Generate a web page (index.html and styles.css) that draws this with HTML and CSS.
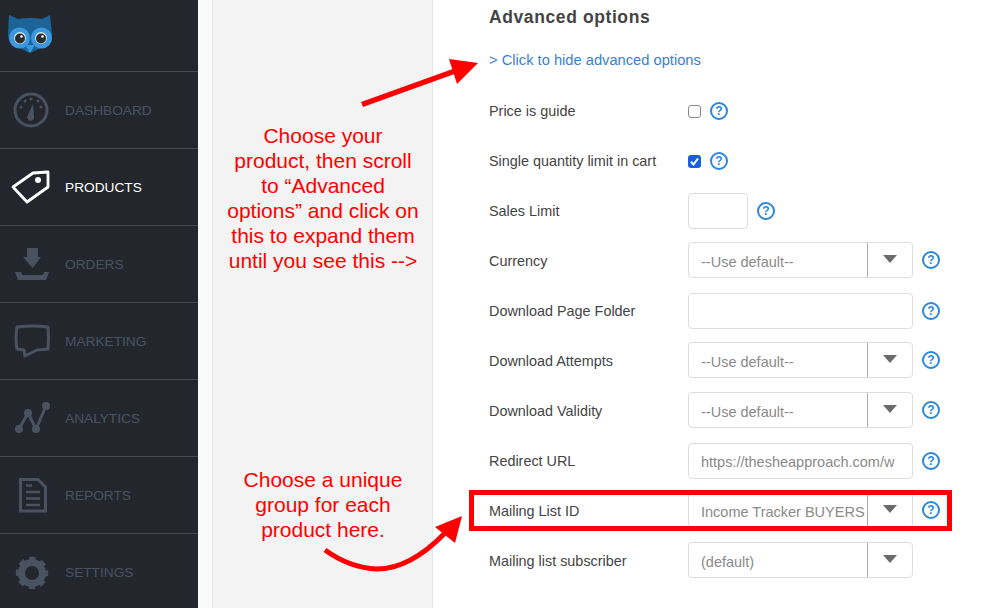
FILE: index.html
```html
<!DOCTYPE html>
<html lang="en">
<head>
    <meta charset="UTF-8">
    <meta name="viewport" content="width=device-width, initial-scale=1.0">
    <title>Advanced options</title>
    <link rel="stylesheet" href="styles.css">
</head>
<body>
    <aside class="sidebar">
        <div class="logo">
            <svg width="60" height="60" viewBox="0 0 60 60">
                <path d="M9 15 L18 19 Q30 17 42 19 L50 15 L52 34 Q52 44 43 47 L30 53 L17 47 Q8 44 8 34 Z" fill="#1a6497"/>
                <circle cx="19.500" cy="38" r="10.500" fill="#3c97de"/>
                <circle cx="41.500" cy="38" r="10.500" fill="#3c97de"/>
                <circle cx="20" cy="38" r="6" fill="#d9e6ee"/>
                <circle cx="41" cy="38" r="6" fill="#d9e6ee"/>
                <circle cx="20" cy="38.500" r="5" fill="#2b2b2b"/>
                <circle cx="41" cy="38.500" r="5" fill="#2b2b2b"/>
                <circle cx="21.500" cy="36.500" r="1.300" fill="#ffffff"/>
                <circle cx="42.500" cy="36.500" r="1.300" fill="#ffffff"/>
                <path d="M25 45 L35 45 L30 53 Z" fill="#2f97de"/>
            </svg>
        </div>
        <a class="nav-item">
            <svg width="40" height="40" viewBox="0 0 40 40">
                <circle cx="20" cy="20" r="16" fill="none" stroke="currentColor" stroke-width="3"/>
                <circle cx="10" cy="17" r="1.500" fill="currentColor"/>
                <circle cx="14" cy="11" r="1.500" fill="currentColor"/>
                <circle cx="20" cy="9" r="1.500" fill="currentColor"/>
                <circle cx="27" cy="11" r="1.500" fill="currentColor"/>
                <circle cx="30" cy="17" r="1.500" fill="currentColor"/>
                <path d="M22 14 L23 26 A3.500 3.500 0 1 1 17 25 Z" fill="currentColor"/>
            </svg>
            <span>DASHBOARD</span>
        </a>
        <a class="nav-item active">
            <svg width="40" height="40" viewBox="0 0 40 40">
                <path d="M22 6 L37 5 L37 20 L16 35 L2 20 Z" fill="none" stroke="currentColor" stroke-width="2.800" stroke-linejoin="round"/>
                <circle cx="27" cy="13" r="3" fill="currentColor"/>
            </svg>
            <span>PRODUCTS</span>
        </a>
        <a class="nav-item">
            <svg width="40" height="40" viewBox="0 0 40 40">
                <path d="M16 4 H27 V13 H30 L21.500 24 L12 13 H16 Z" fill="currentColor"/>
                <path d="M4 28 H10 L11 31 H32 L33 28 H38 L35 36 H7 Z" fill="currentColor"/>
            </svg>
            <span>ORDERS</span>
        </a>
        <a class="nav-item">
            <svg width="40" height="40" viewBox="0 0 40 40">
                <path d="M6 6 Q21 4 37 6 Q38 17 37 28 L26 29 L14 35 L13 29 L6 28 Q4 17 6 6 Z" fill="none" stroke="currentColor" stroke-width="3" stroke-linejoin="round"/>
            </svg>
            <span>MARKETING</span>
        </a>
        <a class="nav-item">
            <svg width="40" height="40" viewBox="0 0 40 40">
                <path d="M8 31 L17 15 L25 31 L35 8" fill="none" stroke="currentColor" stroke-width="3"/>
                <circle cx="8" cy="31" r="4" fill="currentColor"/>
                <circle cx="17" cy="15" r="4" fill="currentColor"/>
                <circle cx="25" cy="31" r="4" fill="currentColor"/>
                <circle cx="35" cy="8" r="4" fill="currentColor"/>
            </svg>
            <span>ANALYTICS</span>
        </a>
        <a class="nav-item">
            <svg width="40" height="40" viewBox="0 0 40 40">
                <path d="M9.500 4.500 H27 L34.500 12 V36 H9.500 Z" fill="none" stroke="currentColor" stroke-width="3"/>
                <path d="M15 10.500 H21 M15 17 H29 M15 23.500 H29 M15 30 H29" fill="none" stroke="currentColor" stroke-width="2.500"/>
            </svg>
            <span>REPORTS</span>
        </a>
        <a class="nav-item">
            <svg width="40" height="40" viewBox="0 0 40 40">
                <circle cx="21" cy="20" r="10.500" fill="none" stroke="currentColor" stroke-width="7"/>
                <circle cx="21" cy="20" r="14" fill="none" stroke="currentColor" stroke-width="4.500" stroke-dasharray="6 5" stroke-dashoffset="3"/>
            </svg>
            <span>SETTINGS</span>
        </a>
    </aside>

    <div class="strip"></div>
    <div class="side-panel"></div>

    <main class="content">
        <h2>Advanced options</h2>
        <a class="toggle">&gt; Click to hide advanced options</a>

        <div class="row">
            <label>Price is guide</label>
            <span class="check"></span>
            <span class="help">?</span>
        </div>
        <div class="row">
            <label>Single quantity limit in cart</label>
            <span class="check checked">
                <svg width="13" height="13" viewBox="0 0 13 13"><path d="M3 6.800 L5.500 9.500 L10 3.500" fill="none" stroke="#fff" stroke-width="2"/></svg>
            </span>
            <span class="help">?</span>
        </div>
        <div class="row">
            <label>Sales Limit</label>
            <div class="field small"></div>
            <span class="help">?</span>
        </div>
        <div class="row">
            <label>Currency</label>
            <div class="field select"><span class="value">--Use default--</span><span class="caret"></span></div>
            <span class="help">?</span>
        </div>
        <div class="row">
            <label>Download Page Folder</label>
            <div class="field"></div>
            <span class="help">?</span>
        </div>
        <div class="row">
            <label>Download Attempts</label>
            <div class="field select"><span class="value">--Use default--</span><span class="caret"></span></div>
            <span class="help">?</span>
        </div>
        <div class="row">
            <label>Download Validity</label>
            <div class="field select"><span class="value">--Use default--</span><span class="caret"></span></div>
            <span class="help">?</span>
        </div>
        <div class="row">
            <label>Redirect URL</label>
            <div class="field"><span class="value">https://thesheapproach.com/w</span></div>
            <span class="help">?</span>
        </div>
        <div class="row">
            <label>Mailing List ID</label>
            <div class="field select"><span class="value">Income Tracker BUYERS</span><span class="caret"></span></div>
            <span class="help">?</span>
        </div>
        <div class="row">
            <label>Mailing list subscriber</label>
            <div class="field select"><span class="value">(default)</span><span class="caret"></span></div>
        </div>
    </main>

    <!-- annotations drawn over the screenshot -->
    <p class="note note-top">Choose your<br>product, then scroll<br>to “Advanced<br>options” and click on<br>this to expand them<br>until you see this --&gt;</p>
    <p class="note note-bottom">Choose a unique<br>group for each<br>product here.</p>
    <svg class="marks" width="985" height="608" viewBox="0 0 985 608">
        <rect x="471.500" y="492.500" width="478" height="36" fill="none" stroke="#fe0000" stroke-width="5"/>
        <path d="M362 104.500 L455 71" fill="none" stroke="#fe0000" stroke-width="5.500"/>
        <path d="M449 59 L478 63 L457 84 Z" fill="#fe0000"/>
        <path d="M325 550 Q350 568 377 569 Q410 569 445 533" fill="none" stroke="#fe0000" stroke-width="5"/>
        <path d="M435 527 L462 516 L455 543 Z" fill="#fe0000"/>
    </svg>
</body>
</html>
```

FILE: styles.css
```css
html, body {
    height: 100%;
}

body {
    margin: 0;
    display: flex;
    height: 608px;
    overflow: hidden;
    position: relative;
    background: #ffffff;
    font-family: "Liberation Sans", Arial, sans-serif;
    color: #444444;
}

.sidebar {
    width: 198px;
    flex: none;
    background: #23272d;
}

.logo {
    height: 72px;
    box-sizing: border-box;
    border-bottom: 1px solid #454a55;
}

.logo svg {
    display: block;
}

.nav-item {
    display: flex;
    align-items: center;
    gap: 14px;
    height: 77px;
    box-sizing: border-box;
    padding-left: 11px;
    border-bottom: 1px solid #454a55;
    color: #4a5262;
    font-size: 13.700px;
}

.nav-item:last-child {
    border-bottom: none;
}

.nav-item.active {
    color: #ffffff;
}

.strip {
    width: 14px;
    flex: none;
    background: #fafafa;
}

.side-panel {
    width: 221px;
    box-sizing: border-box;
    flex: none;
    background: #f3f3f3;
    border-left: 1px solid #ebebeb;
    border-right: 1px solid #e6e6e6;
}

.content {
    flex: 1;
    padding: 0 0 0 56px;
}

h2 {
    margin: 0;
    height: 35px;
    line-height: 35px;
    font-size: 17.500px;
    letter-spacing: 0.6px;
    color: #444444;
}

.toggle {
    display: block;
    height: 51px;
    line-height: 50px;
    font-size: 14.700px;
    color: #3c7fd0;
}

.row {
    display: flex;
    align-items: center;
    height: 50px;
}

.row label {
    width: 199px;
    flex: none;
    font-size: 14.400px;
    color: #444444;
}

.check {
    width: 11px;
    height: 11px;
    flex: none;
    border: 1px solid #8a8a8a;
    border-radius: 3px;
    background: #ffffff;
    margin-right: 9px;
    display: flex;
}

.check.checked {
    width: 13px;
    height: 13px;
    border: none;
    background: #1a5fe0;
}

.help {
    width: 14px;
    height: 14px;
    flex: none;
    border: 2px solid #2b87da;
    border-radius: 50%;
    color: #2b87da;
    font-size: 12px;
    font-weight: bold;
    line-height: 14px;
    text-align: center;
}

.field {
    width: 225px;
    height: 36px;
    box-sizing: border-box;
    flex: none;
    display: flex;
    align-items: center;
    margin-right: 9px;
    border: 1px solid #dddddd;
    border-radius: 4px;
    background: #ffffff;
    font-size: 14.500px;
    color: #8a8a8a;
    overflow: hidden;
}

.field.small {
    width: 60px;
}

/* select rows sit a pixel higher than the plain inputs */
.select,
.select + .help {
    margin-bottom: 2px;
}

.value {
    flex: 1;
    min-width: 0;
    margin: 0 13px 0 12px;
    padding-top: 1px;
    white-space: nowrap;
    overflow: hidden;
}

.select .value {
    margin-right: 0;
    padding-top: 3px;
}

.caret {
    position: relative;
    width: 45px;
    height: 100%;
    flex: none;
    box-sizing: border-box;
    border-left: 1px solid #aaaaaa;
}

.caret::after {
    content: "";
    position: absolute;
    left: 15px;
    top: 12px;
    border-style: solid;
    border-width: 8px 7.500px 0;
    border-color: #6b6b6b transparent transparent;
}

.note {
    position: absolute;
    left: 213px;
    width: 220px;
    margin: 0;
    font-size: 21px;
    line-height: 25px;
    text-align: center;
    color: #fe0000;
}

.note-top {
    top: 123px;
}

.note-bottom {
    top: 467px;
}

.marks {
    position: absolute;
    left: 0;
    top: 0;
}
```
